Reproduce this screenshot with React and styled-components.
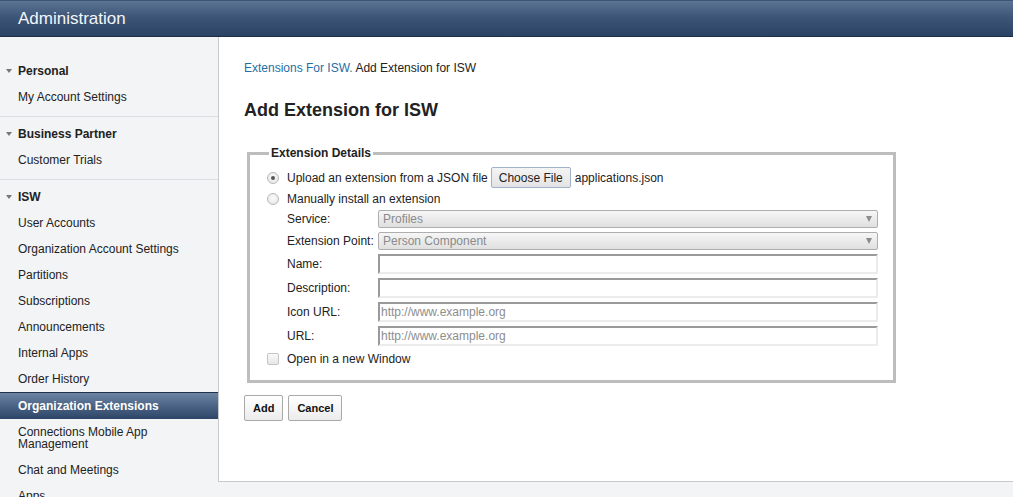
import React from "react";
import styled, { createGlobalStyle } from "styled-components";

const GlobalStyle = createGlobalStyle`
  html, body {
    margin: 0;
    padding: 0;
    background: #f3f4f6;
    font-family: "Liberation Sans", Arial, sans-serif;
    font-size: 12px;
    color: #222;
    overflow: hidden;
  }
`;

const Page = styled.div`
  height: 497px;
  display: flex;
  flex-direction: column;
`;

const Banner = styled.div`
  height: 37px;
  border-top: 1px solid #3e5473;
  box-sizing: border-box;
  background: linear-gradient(#5c7493 0%, #3d5577 45%, #2a4263 100%);
  border-bottom: 1px solid #1d2f48;
  display: flex;
  align-items: center;
  padding-left: 18px;
  color: #f4f6fa;
  font-size: 17px;
`;

const Body = styled.div`
  display: flex;
  align-items: flex-start;
  flex: 1;
  min-height: 0;
`;

const Sidebar = styled.nav`
  width: 218px;
  flex: none;
  padding-top: 17px;
  background: #f3f4f6;
`;

const Section = styled.div`
  padding: 4px 0 6px;
  border-bottom: ${(p) => (p.$last ? "none" : "1px solid #dcdde0")};
`;

const SectionTitle = styled.div`
  position: relative;
  height: 26px;
  line-height: 26px;
  padding-left: 18px;
  font-weight: bold;

  &::before {
    content: "";
    position: absolute;
    left: 6px;
    top: 11px;
    border-left: 3.5px solid transparent;
    border-right: 3.5px solid transparent;
    border-top: 4px solid #777;
  }
`;

const NavItem = styled.div`
  padding: 7px 10px 7px 18px;
  line-height: 12px;
  min-height: 12px;
  ${(p) =>
    p.$active &&
    `
    font-weight: bold;
    color: #fff;
    line-height: 12px;
    border-top: 1px solid #1e2f47;
    background: linear-gradient(#6e86a5 0%, #4b6384 50%, #2d4566 100%);
  `}
`;

const Content = styled.main`
  flex: 1;
  height: 445px;
  box-sizing: border-box;
  background: #fff;
  border-left: 1px solid #c8c9cc;
  border-bottom: 1px solid #c8c9cc;
  padding: 23px 25px 0;
`;

const Crumbs = styled.div`
  line-height: 16px;
  color: #222;
`;

const CrumbLink = styled.a`
  color: #1f6fa3;
  text-decoration: none;
`;

const Title = styled.h1`
  margin: 22px 0 0;
  font-size: 18px;
  line-height: 24px;
  font-weight: bold;
  color: #222;
`;

const Fieldset = styled.fieldset`
  margin: 24px 0 0 3px;
  width: 649px;
  box-sizing: border-box;
  border: 3px solid #bdbdbd;
  padding: 6px 15px 11px 17px;
`;

const Legend = styled.legend`
  font-weight: bold;
  padding: 0 2px;
  margin-left: 2px;
  line-height: 14px;
`;

const OptionRow = styled.div`
  display: flex;
  align-items: center;
  gap: 8px;
  height: ${(p) => p.$h || 20}px;
`;

const Radio = styled.span`
  width: 12px;
  height: 12px;
  border-radius: 50%;
  border: 1px solid #b8b8b8;
  box-sizing: border-box;
  background: radial-gradient(circle at 50% 40%, #fbfbfb, #e2e2e2);
  display: flex;
  align-items: center;
  justify-content: center;

  &::after {
    content: "";
    width: 4px;
    height: 4px;
    border-radius: 50%;
    background: ${(p) => (p.$checked ? "#555" : "transparent")};
  }
`;

const Checkbox = styled.span`
  width: 12px;
  height: 12px;
  border-radius: 2px;
  border: 1px solid #c4c4c4;
  box-sizing: border-box;
  background: linear-gradient(#fafafa, #e6e6e6);
`;

const FileButton = styled.button`
  font-family: inherit;
  font-size: 12px;
  color: #222;
  height: 21px;
  width: 80px;
  padding: 0;
  margin-left: -5px;
  border: 1px solid #9fb2c9;
  border-radius: 2px;
  background: linear-gradient(#f4f4f4, #e4e4e4);
`;

const FileName = styled.span`
  margin-left: -4px;
`;

const Grid = styled.div`
  display: grid;
  grid-template-columns: 91px 500px;
  row-gap: 4px;
  align-items: center;
  padding-left: 20px;
  margin: 1px 0 3px;
`;

const Label = styled.span`
  line-height: 16px;
  white-space: nowrap;
`;

const Select = styled.div`
  height: 18px;
  box-sizing: border-box;
  border: 1px solid #aeaeae;
  border-radius: 2px;
  background: linear-gradient(#f6f6f6, #e0e0e0);
  color: #8a8a8a;
  display: flex;
  align-items: center;
  justify-content: space-between;
  padding: 0 4px;

  &::after {
    content: "";
    border-left: 3.5px solid transparent;
    border-right: 3.5px solid transparent;
    border-top: 6px solid #8c8c8c;
    margin-right: 1px;
  }
`;

const TextInput = styled.input`
  height: 20px;
  box-sizing: border-box;
  width: 100%;
  margin: 0;
  padding: 0 1px;
  font-family: inherit;
  font-size: 12px;
  color: #222;
  border-style: solid;
  border-width: 2px;
  border-color: #9a9a9a #ececec #ececec #9a9a9a;
  outline: none;

  &::placeholder {
    color: #8d8d8d;
  }
`;

const Actions = styled.div`
  display: flex;
  gap: 5px;
  margin-top: 12px;
`;

const Button = styled.button`
  font-family: inherit;
  font-size: 11px;
  font-weight: bold;
  color: #111;
  height: 26px;
  padding: 0 ${(p) => p.$pad || 8}px;
  border: 1px solid #a9a9a9;
  border-radius: 2px;
  background: linear-gradient(#ffffff, #ececec);
`;

const isw = [
  "User Accounts",
  "Organization Account Settings",
  "Partitions",
  "Subscriptions",
  "Announcements",
  "Internal Apps",
  "Order History",
];

const fields = [
  { label: "Name:" },
  { label: "Description:" },
  { label: "Icon URL:", placeholder: "http://www.example.org" },
  { label: "URL:", placeholder: "http://www.example.org" },
];

export default function App() {
  return (
    <Page>
      <GlobalStyle />
      <Banner>Administration</Banner>
      <Body>
        <Sidebar>
          <Section>
            <SectionTitle>Personal</SectionTitle>
            <NavItem>My Account Settings</NavItem>
          </Section>
          <Section>
            <SectionTitle>Business Partner</SectionTitle>
            <NavItem>Customer Trials</NavItem>
          </Section>
          <Section $last>
            <SectionTitle>ISW</SectionTitle>
            {isw.map((item) => (
              <NavItem key={item}>{item}</NavItem>
            ))}
            <NavItem $active>Organization Extensions</NavItem>
            <NavItem>
              Connections Mobile App
              <br />
              Management
            </NavItem>
            <NavItem>Chat and Meetings</NavItem>
            <NavItem>Apps</NavItem>
          </Section>
        </Sidebar>
        <Content>
          <Crumbs>
            <CrumbLink href="#">Extensions For ISW.</CrumbLink> Add Extension for ISW
          </Crumbs>
          <Title>Add Extension for ISW</Title>
          <Fieldset>
            <Legend>Extension Details</Legend>
            <OptionRow $h={23}>
              <Radio $checked />
              <span>Upload an extension from a JSON file</span>
              <FileButton type="button">Choose File</FileButton>
              <FileName>applications.json</FileName>
            </OptionRow>
            <OptionRow>
              <Radio />
              <span>Manually install an extension</span>
            </OptionRow>
            <Grid>
              <Label>Service:</Label>
              <Select>Profiles</Select>
              <Label>Extension Point:</Label>
              <Select>Person Component</Select>
              {fields.map((f) => (
                <React.Fragment key={f.label}>
                  <Label>{f.label}</Label>
                  <TextInput placeholder={f.placeholder} />
                </React.Fragment>
              ))}
            </Grid>
            <OptionRow>
              <Checkbox />
              <span>Open in a new Window</span>
            </OptionRow>
          </Fieldset>
          <Actions>
            <Button>Add</Button>
            <Button $pad={8}>Cancel</Button>
          </Actions>
        </Content>
      </Body>
    </Page>
  );
}
